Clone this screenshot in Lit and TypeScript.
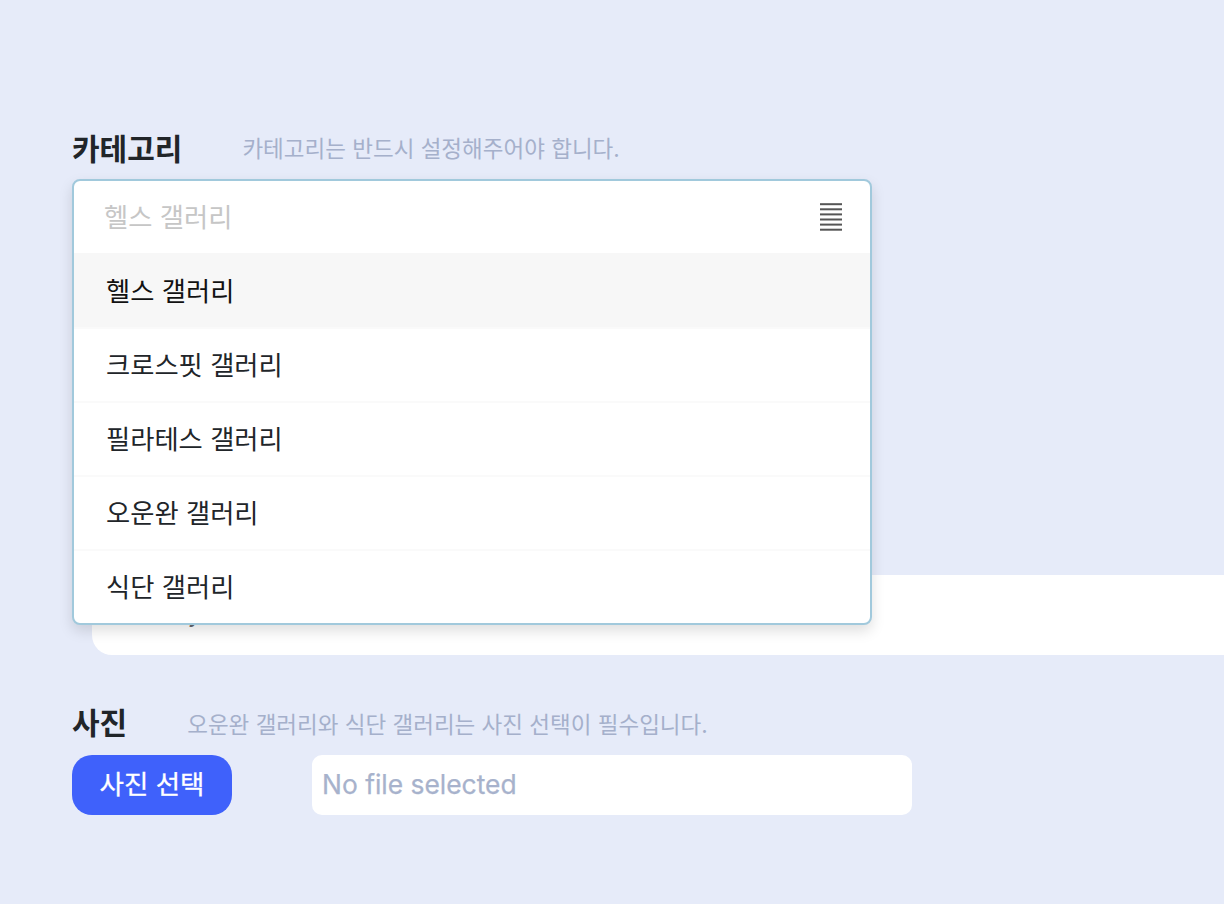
import { LitElement, html, css } from "lit";
import { customElement } from "lit/decorators.js";

const options = ["헬스 갤러리", "크로스핏 갤러리", "필라테스 갤러리", "오운완 갤러리", "식단 갤러리"];

@customElement("app-root")
export class AppRoot extends LitElement {
  static styles = css`
    :host {
      display: block;
      width: 1224px;
      height: 904px;
      overflow: hidden;
      background: #e6ebf9;
      font-family: Inter, "Noto Sans CJK KR", sans-serif;
      color: #212529;
    }
    .page {
      display: flex;
      flex-direction: column;
      padding: 128px 0 0 72px;
      box-sizing: border-box;
    }
    .label-row {
      display: flex;
      align-items: center;
      height: 40px;
    }
    .label {
      font-size: 30px;
      font-weight: 700;
      color: #212529;
      padding-bottom: 3px;
    }
    .hint {
      font-size: 22.5px;
      color: #a5b0cb;
      margin-left: 60px;
      padding-bottom: 2px;
    }
    .photo .hint { padding-bottom: 0; padding-top: 1px; }
    .photo .label { padding-bottom: 2px; }
    .field {
      position: relative;
      height: 80px;
      margin: 407px 0 0 20px;
      width: 1200px;
      background: #fff;
      border-radius: 20px;
      box-sizing: border-box;
      padding: 0 0 4px 40px;
      display: flex;
      align-items: center;
      font-size: 24px;
      color: #666a70;
    }
    .dropdown-wrap { position: relative; height: 0; }
    .dropdown {
      position: absolute;
      z-index: 2;
      top: 11px;
      left: 0;
      width: 800px;
      box-sizing: border-box;
      background: #fff;
      border: 2px solid #a1c9dc;
      border-radius: 8px;
      box-shadow: 0 6px 14px rgba(0, 0, 0, 0.13);
      overflow: hidden;
    }
    .head {
      height: 72px;
      display: flex;
      align-items: center;
      justify-content: space-between;
      padding: 0 28px 0 30px;
      font-size: 26.3px;
      color: #c6c6c6;
    }
    .head span { padding-bottom: 4px; }
    .lines { display: block; }
    .opt {
      height: 74px;
      display: flex;
      align-items: center;
      padding: 0 0 4px 32px;
      font-size: 26.3px;
      color: #212529;
      box-sizing: border-box;
      border-top: 2px solid #fafafa;
    }
    .opt.active { background: #f7f7f7; color: #111; border-top-color: #f7f7f7; }
    .label-row.photo { margin-top: 47px; }
    .file-row {
      display: flex;
      align-items: center;
      margin-top: 13px;
    }
    .btn {
      width: 160px;
      height: 60px;
      display: flex;
      align-items: center;
      justify-content: center;
      padding-bottom: 5px;
      box-sizing: border-box;
      background: #3f61fb;
      color: #fff;
      border-radius: 20px;
      font-size: 26.5px;
      font-weight: 400;
      -webkit-text-stroke: 0.3px #fff;
    }
    .file {
      margin-left: 80px;
      width: 600px;
      height: 60px;
      display: flex;
      align-items: center;
      padding: 0 0 2px 10px;
      box-sizing: border-box;
      background: #fff;
      border-radius: 10px;
      font-size: 26.4px;
      font-weight: 400;
      color: #a7b2cc;
      -webkit-text-stroke: 0.25px #a7b2cc;
    }
  `;

  render() {
    return html`
      <div class="page">
        <div class="label-row">
          <span class="label">카테고리</span>
          <span class="hint">카테고리는 반드시 설정해주어야 합니다.</span>
        </div>
        <div class="dropdown-wrap">
          <div class="dropdown">
            <div class="head">
              <span>헬스 갤러리</span>
              <svg class="lines" width="22" height="30" viewBox="0 0 22 30">
                <g fill="#555">
                  <rect x="0" y="1.2" width="22" height="2"></rect>
                  <rect x="0" y="6.3" width="22" height="2"></rect>
                  <rect x="0" y="11.4" width="22" height="2"></rect>
                  <rect x="0" y="16.5" width="22" height="2"></rect>
                  <rect x="0" y="21.6" width="22" height="2"></rect>
                  <rect x="0" y="26.7" width="22" height="2"></rect>
                </g>
              </svg>
            </div>
            ${options.map(
              (o, i) => html`<div class="opt ${i === 0 ? "active" : ""}">${o}</div>`
            )}
          </div>
        </div>
        <div class="field">Today workout</div>
        <div class="label-row photo">
          <span class="label">사진</span>
          <span class="hint">오운완 갤러리와 식단 갤러리는 사진 선택이 필수입니다.</span>
        </div>
        <div class="file-row">
          <div class="btn">사진 선택</div>
          <div class="file">No file selected</div>
        </div>
      </div>
    `;
  }
}
